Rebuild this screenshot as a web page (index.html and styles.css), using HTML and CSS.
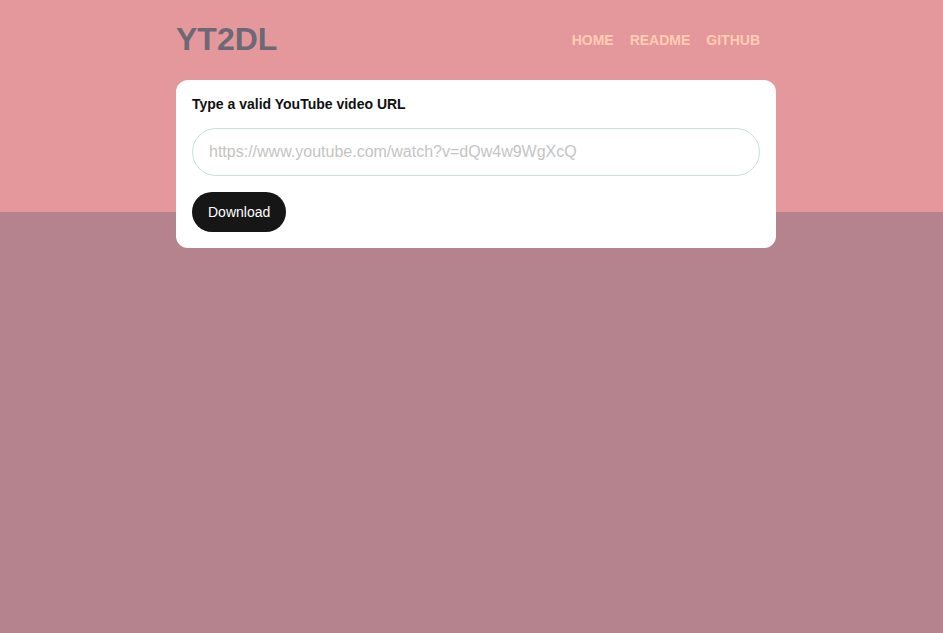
FILE: index.html
```html
<!DOCTYPE html>
<html>
<head>
<meta charset="utf-8">
<link rel="stylesheet" href="styles.css">
</head>
<body>
<div class="band"></div>
<div class="page">
  <header class="header">
    <div class="logo">YT2DL</div>
    <nav class="nav">
      <a href="#">HOME</a>
      <a href="#">README</a>
      <a href="#">GITHUB</a>
    </nav>
  </header>
  <main class="card">
    <label class="label" for="url">Type a valid YouTube video URL</label>
    <input id="url" class="input" type="text" placeholder="https://www.youtube.com/watch?v=dQw4w9WgXcQ">
    <div><button class="btn">Download</button></div>
  </main>
</div>
</body>
</html>
```

FILE: styles.css
```css
html, body {
  margin: 0;
  padding: 0;
  height: 100%;
}
body {
  background: #b5838d;
  font-family: "Liberation Sans", Arial, sans-serif;
  position: relative;
  padding-left: 9px;
  box-sizing: border-box;
}
.band {
  position: absolute;
  left: 0;
  top: 0;
  right: 0;
  height: 212px;
  background: #e5989b;
}
.page {
  position: relative;
  width: 600px;
  margin: 0 auto;
}
.header {
  height: 80px;
  display: flex;
  align-items: center;
  justify-content: space-between;
}
.logo {
  font-size: 32px;
  font-weight: bold;
  color: #6d6875;
  line-height: 1;
  margin-top: -2px;
}
.nav {
  display: flex;
  padding-right: 8px;
}
.nav a {
  color: #ffcdb2;
  font-weight: bold;
  font-size: 14px;
  text-decoration: none;
  padding: 0 8px;
}
.card {
  background: #fff;
  border-radius: 12px;
  padding: 16px;
  display: flex;
  flex-direction: column;
  gap: 16px;
}
.label {
  font-size: 14px;
  font-weight: bold;
  color: #111;
  line-height: 16px;
}
.input {
  box-sizing: border-box;
  height: 48px;
  width: 100%;
  border: 1px solid #cfdede;
  border-radius: 24px;
  padding: 0 16px;
  font-size: 16px;
  font-family: "Liberation Sans", Arial, sans-serif;
  outline: none;
}
.input::placeholder {
  color: #c4c4c4;
}
.btn {
  height: 40px;
  padding: 0 16px;
  border: none;
  border-radius: 20px;
  background: #161616;
  color: #fff;
  font-size: 14px;
  font-family: "Liberation Sans", Arial, sans-serif;
}
```
